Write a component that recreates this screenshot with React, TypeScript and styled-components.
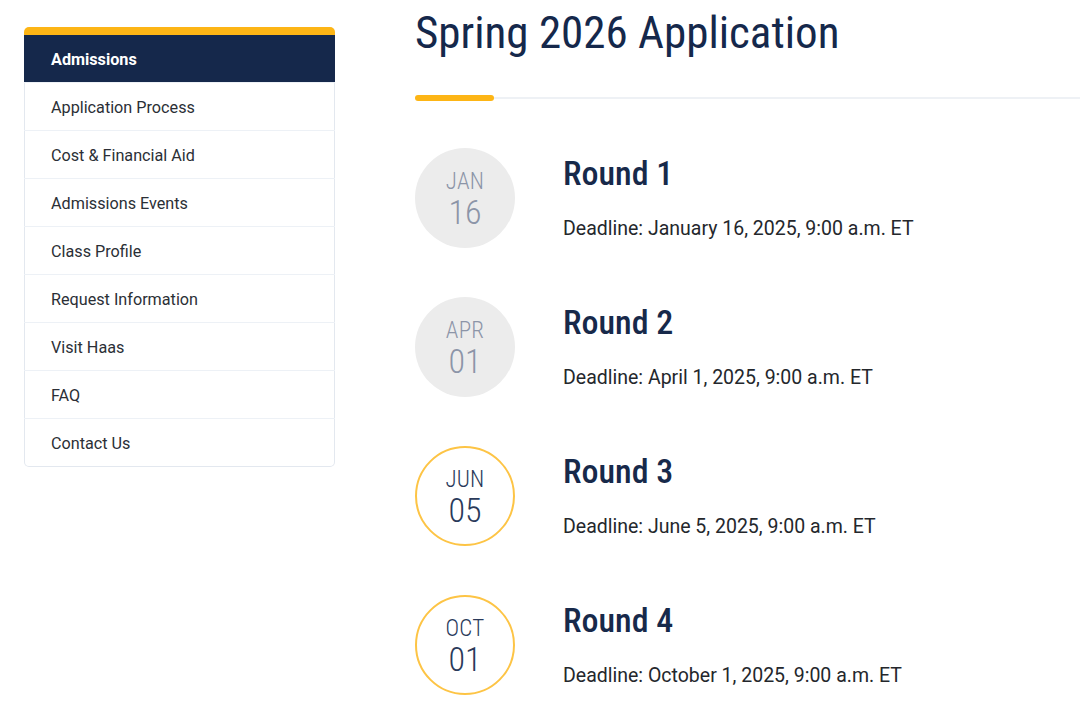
import * as React from 'react';
import styled, { createGlobalStyle, css } from 'styled-components';

const GlobalStyle = createGlobalStyle`
    html, body {
        margin: 0;
        padding: 0;
        background: #ffffff;
        font-family: Roboto, 'Liberation Sans', sans-serif;
    }
`

const Page = styled.div`
    display: flex;
    align-items: flex-start;
    gap: 80px;
    padding-left: 24px;
    width: 1080px;
    height: 704px;
    overflow: hidden;
    box-sizing: border-box;
`

const SideNav = styled.nav`
    width: 311px;
    flex-shrink: 0;
    margin-top: 27px;
    border-top: 8px solid #fdb515;
    border-radius: 5px;
    overflow: hidden;
    box-shadow: inset 0 0 0 1px #e3e8ef;
    background: #ffffff;
`

const NavItem = styled.div<{ active?: boolean }>`
    height: 48px;
    display: flex;
    align-items: center;
    padding-left: 27px;
    padding-top: 1px;
    font-size: 16.2px;
    color: #2b2f36;
    border-bottom: 1px solid #edf1f6;
    box-sizing: border-box;
    &:last-child {
        border-bottom: none;
    }
    ${props => props.active && css`
        background: #15284b;
        color: #ffffff;
        font-weight: 700;
    `}
`

const Main = styled.main`
    flex: 1;
    display: flex;
    flex-direction: column;
`

const Title = styled.h1`
    margin: 0;
    padding-top: 5px;
    font-family: 'Roboto Condensed', 'Liberation Sans Narrow', Roboto, sans-serif;
    font-stretch: condensed;
    font-weight: 400;
    font-size: 45px;
    line-height: 56px;
    color: #15284b;
`

const Rule = styled.div`
    margin-top: 36px;
    height: 2px;
    background: #eef1f5;
    position: relative;
    &::before {
        content: '';
        position: absolute;
        left: 0;
        top: -2px;
        width: 79px;
        height: 6px;
        border-radius: 3px;
        background: #fdb515;
    }
`

const RoundList = styled.div`
    display: flex;
    flex-direction: column;
    gap: 49px;
    margin-top: 49px;
`

const RoundRow = styled.div`
    display: flex;
    align-items: flex-start;
    gap: 48px;
`

const DateBadge = styled.div<{ upcoming?: boolean }>`
    width: 100px;
    height: 100px;
    border-radius: 50%;
    box-sizing: border-box;
    flex-shrink: 0;
    display: flex;
    flex-direction: column;
    align-items: center;
    justify-content: center;
    padding-top: 4px;
    font-family: 'Roboto Condensed', Roboto, sans-serif;
    font-stretch: condensed;
    font-weight: 300;
    ${props => props.upcoming ? css`
        border: 2px solid #fdc445;
        color: #2a3a5a;
    ` : css`
        background: #ececec;
        color: #8c95a8;
    `}
`

const Month = styled.span`
    font-size: 23px;
    line-height: 24px;
    letter-spacing: 0.2px;
`

const Day = styled.span`
    font-size: 34px;
    line-height: 36px;
`

const RoundInfo = styled.div`
    display: flex;
    flex-direction: column;
    padding-top: 5px;
`

const RoundTitle = styled.h2`
    margin: 0;
    font-family: 'Roboto Condensed', Roboto, sans-serif;
    font-stretch: condensed;
    font-weight: 500;
    font-size: 34px;
    line-height: 40px;
    color: #17294a;
`

const Deadline = styled.p`
    margin: 24px 0 0;
    font-size: 19.5px;
    line-height: 24px;
    color: #24272c;
`

const navItems = [
    'Application Process',
    'Cost & Financial Aid',
    'Admissions Events',
    'Class Profile',
    'Request Information',
    'Visit Haas',
    'FAQ',
    'Contact Us',
]

const rounds = [
    { month: 'JAN', day: '16', name: 'Round 1', deadline: 'January 16, 2025, 9:00 a.m. ET', upcoming: false },
    { month: 'APR', day: '01', name: 'Round 2', deadline: 'April 1, 2025, 9:00 a.m. ET', upcoming: false },
    { month: 'JUN', day: '05', name: 'Round 3', deadline: 'June 5, 2025, 9:00 a.m. ET', upcoming: true },
    { month: 'OCT', day: '01', name: 'Round 4', deadline: 'October 1, 2025, 9:00 a.m. ET', upcoming: true },
]

const App: React.FC = () => {
    return (
        <>
            <GlobalStyle />
            <Page>
                <SideNav>
                    <NavItem active>Admissions</NavItem>
                    {navItems.map(item => (
                        <NavItem key={item}>{item}</NavItem>
                    ))}
                </SideNav>
                <Main>
                    <Title>Spring 2026 Application</Title>
                    <Rule />
                    <RoundList>
                        {rounds.map(round => (
                            <RoundRow key={round.name}>
                                <DateBadge upcoming={round.upcoming}>
                                    <Month>{round.month}</Month>
                                    <Day>{round.day}</Day>
                                </DateBadge>
                                <RoundInfo>
                                    <RoundTitle>{round.name}</RoundTitle>
                                    <Deadline>Deadline: {round.deadline}</Deadline>
                                </RoundInfo>
                            </RoundRow>
                        ))}
                    </RoundList>
                </Main>
            </Page>
        </>
    );
};

export default App;
